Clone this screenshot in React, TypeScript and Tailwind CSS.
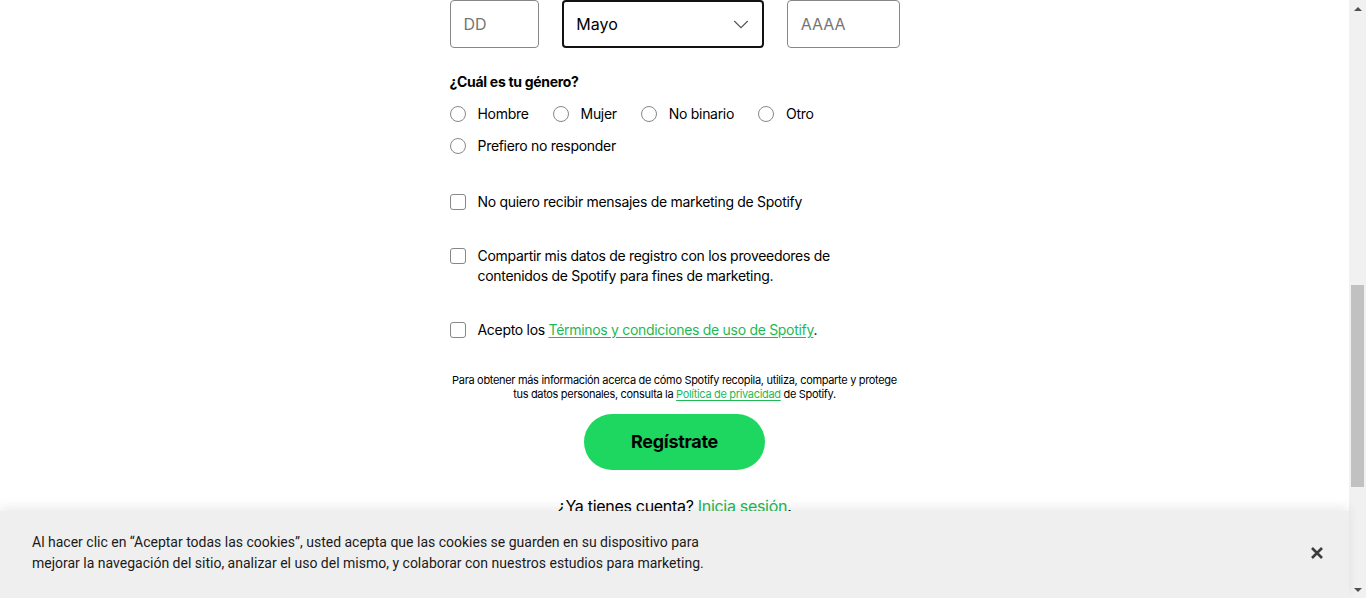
import React from "react";

const font = { fontFamily: "Inter, 'Noto Sans', sans-serif" };

const genders = ["Hombre", "Mujer", "No binario", "Otro", "Prefiero no responder"];

function Radio({ label }: { label: string }) {
  return (
    <label className="flex items-center gap-3 h-8 text-sm text-black tracking-[-0.3px]">
      <span className="w-4 h-4 rounded-full border border-[#878787] bg-white" />
      {label}
    </label>
  );
}

function Check({ children }: { children: React.ReactNode }) {
  return (
    <label className="flex items-start gap-3 text-sm leading-5 text-black tracking-[-0.3px]">
      <span className="mt-0.5 w-4 h-4 shrink-0 rounded-[3px] border border-[#878787] bg-white" />
      <span>{children}</span>
    </label>
  );
}

export default function App() {
  return (
    <div className="relative flex h-[598px] w-full overflow-hidden bg-white" style={font}>
      <main className="flex-1 flex justify-center">
        <div className="w-[450px] flex flex-col">
          {/* date row */}
          <div className="flex gap-[23px]">
            <div className="w-[90px] h-12 rounded border border-[#878787] flex items-center px-[13px] text-base text-[#757575]">
              DD
            </div>
            <div className="w-[202px] h-12 rounded border-2 border-[#121212] flex items-center justify-between pl-3 pr-3 text-base text-black">
              Mayo
              <svg width="18" height="18" viewBox="0 0 24 24" fill="none" stroke="#535353" strokeWidth="1.5">
                <path d="M3 8l9 9 9-9" />
              </svg>
            </div>
            <div className="w-[113px] h-12 rounded border border-[#878787] flex items-center px-[13px] text-base text-[#757575]">
              AAAA
            </div>
          </div>

          <p className="mt-6 text-sm font-bold text-black leading-5 tracking-[-0.3px]">¿Cuál es tu género?</p>
          <div className="mt-[6px] flex flex-wrap gap-x-6">
            {genders.map((g) => (
              <Radio key={g} label={g} />
            ))}
          </div>

          <div className="mt-[30px] flex flex-col gap-[34px]">
            <Check>No quiero recibir mensajes de marketing de Spotify</Check>
            <Check>
              Compartir mis datos de registro con los proveedores de contenidos de Spotify para fines de marketing.
            </Check>
            <Check>
              Acepto los{" "}
              <a className="text-[#1db954] underline underline-offset-2">Términos y condiciones de uso de Spotify</a>.
            </Check>
          </div>

          <p className="mt-[33px] -mx-1 text-[11px] leading-[14px] text-center text-black tracking-[-0.32px]">
            Para obtener más información acerca de cómo Spotify recopila, utiliza, comparte y protege tus datos
            personales, consulta la{" "}
            <a className="text-[#1db954] underline underline-offset-2">Política de privacidad</a> de Spotify.
          </p>

          <div className="mt-[13px] flex justify-center">
            <button className="w-[181px] h-14 rounded-full bg-[#1ed760] text-lg font-bold text-black tracking-[-0.3px]">
              Regístrate
            </button>
          </div>

          <p className="mt-6 text-center text-base leading-6 text-black tracking-[-0.3px]">
            ¿Ya tienes cuenta? <a className="text-[#1db954]">Inicia sesión</a>.
          </p>
        </div>
      </main>

      {/* scrollbar */}
      <div className="w-[17px] shrink-0 bg-[#f1f1f1] flex flex-col items-center relative">
        <div className="h-[17px] flex items-center justify-center">
          <div className="w-0 h-0 border-l-4 border-r-4 border-b-4 border-l-transparent border-r-transparent border-b-[#505050]" />
        </div>
        <div className="mt-[268px] w-[13px] h-[202px] bg-[#c1c1c1]" />
        <div className="mt-auto h-[17px] flex items-center justify-center">
          <div className="w-0 h-0 border-l-4 border-r-4 border-t-4 border-l-transparent border-r-transparent border-t-[#505050]" />
        </div>
      </div>

      {/* cookie banner */}
      <div
        className="absolute left-0 right-[17px] bottom-0 h-[87px] bg-[#efefef] shadow-[0_-4px_10px_rgba(0,0,0,0.08)] flex items-center justify-between pl-8 pr-[25px] pb-1"
        style={{ fontFamily: "Roboto, sans-serif" }}
      >
        <p className="text-sm leading-[21px] text-[#1a1a1a] w-[700px]">
          Al hacer clic en “Aceptar todas las cookies”, usted acepta que las cookies se guarden en su dispositivo para
          mejorar la navegación del sitio, analizar el uso del mismo, y colaborar con nuestros estudios para marketing.
        </p>
        <svg width="14" height="14" viewBox="0 0 14 14" stroke="#3c3c3c" strokeWidth="2.6">
          <path d="M2 2l10 10M12 2L2 12" />
        </svg>
      </div>
    </div>
  );
}
